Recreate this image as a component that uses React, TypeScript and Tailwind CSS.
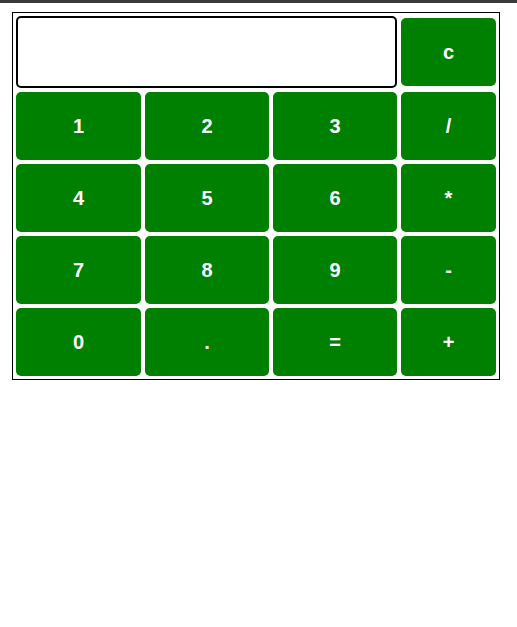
import React from 'react';

const keys = ['1', '2', '3', '/', '4', '5', '6', '*', '7', '8', '9', '-', '0', '.', '=', '+'];

const Key: React.FC<{ label: string; className?: string }> = ({ label, className = '' }) => (
  <button
    className={`bg-[#008000] text-white font-bold text-[20px] rounded-[5px] h-[68px] w-full flex items-center justify-center ${className}`}
  >
    {label}
  </button>
);

const App: React.FC = () => {
  return (
    <div className="min-h-[627px] bg-white" style={{ fontFamily: '"Liberation Sans", Arial, sans-serif' }}>
      <div className="h-[3px] bg-[#3b3b3b]" />
      <div className="pt-[9px] pl-3">
        <div className="w-[488px] border border-black p-[3px] grid grid-cols-[125px_124px_124px_95px] grid-rows-[72px_68px_68px_68px_68px] gap-[4px]">
          <input
            type="text"
            className="col-span-3 h-[72px] border-2 border-black rounded-[5px] outline-none px-2 text-[20px]"
          />
          <Key label="c" className="self-center" />
          {keys.map((k) => (
            <Key key={k} label={k} />
          ))}
        </div>
      </div>
    </div>
  );
};

export default App;
